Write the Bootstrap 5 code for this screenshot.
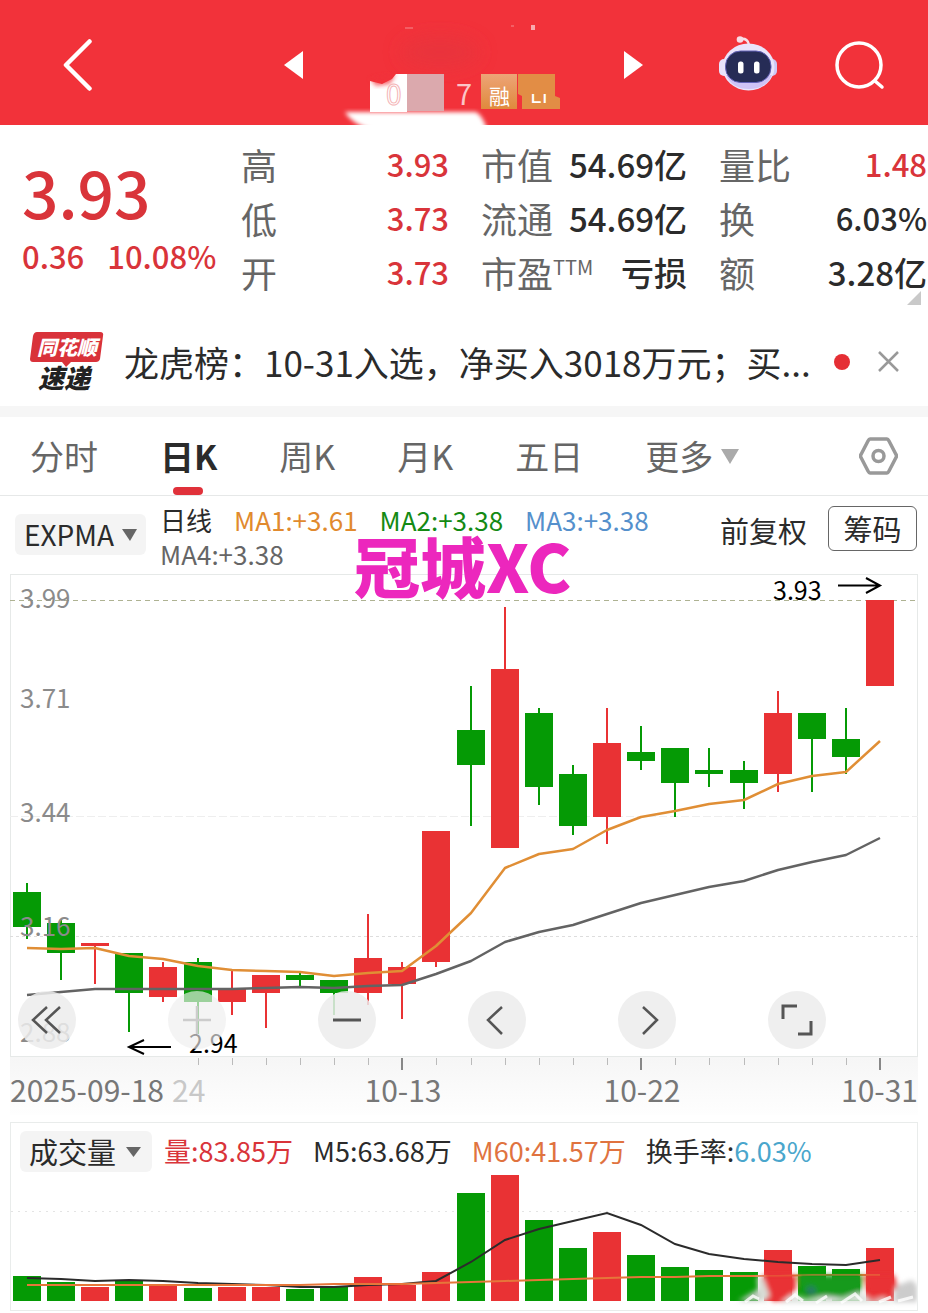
<!DOCTYPE html>
<html lang="zh-CN">
<head>
<meta charset="utf-8">
<meta name="viewport" content="width=device-width, initial-scale=1">
<title>日K</title>
<link href="https://cdn.jsdelivr.net/npm/bootstrap@5.3.0/dist/css/bootstrap.min.css" rel="stylesheet">
<style>
  :root { --up: #e93234; --down: #059a05; --ink: #2b2b2b; --muted: #666; }
  body { font-family: "Noto Sans CJK SC", sans-serif; color: var(--ink); background: #fff; overflow-x: hidden; }
  button { font-family: inherit; }
  svg { display: block; }
  .bare { background: none; border: 0; padding: 0; color: inherit; }
  .topbar { display: grid; grid-template-columns: 29px 192fr 359px 76fr 58px 58fr 49px; align-items: center; height: 125px; padding: 0 44px 0 63px; background: #f2323a; }
  .topbar .bare { padding-top: 4px; }
  .up { color: #d9343a; }
  .quote { display: grid; grid-template-columns: minmax(0, 187fr) minmax(0, 208fr) minmax(0, 206fr) minmax(0, 208fr); column-gap: 32px; padding: 12px 1px 24px 22px; white-space: nowrap; }
  .price { font-size: 64px; line-height: 96px; font-weight: 500; margin-top: 6px; }
  .change { font-size: 31px; line-height: 34px; font-weight: 500; column-gap: 23px; }
  .stat { height: 54px; line-height: 54px; }
  .stat dt { font-size: 36px; font-weight: 400; color: var(--muted); }
  .stat dd { font-size: 31px; font-weight: 500; }
  .stat .han { font-size: 33px; }
  .stat .ttm { font-size: 20px; line-height: 20px; align-self: flex-start; margin-top: 12px; }
  .fold { right: 7px; bottom: 18px; }
  .news { height: 83px; padding: 0 29px 6px 29px; }
  .news svg { overflow: visible; }
  .news a { font-size: 35px; line-height: 52px; color: var(--ink); margin-left: 19px; }
  .news-dot { margin: 0 28px 0 20px; }
  .band { height: 11px; background: #f6f6f6; }
  .tabs { height: 79px; padding: 0 30px 0 30px; border-bottom: 1px solid #e6e8e8; column-gap: 62px; }
  .tabs .bare { font-size: 34px; line-height: 78px; color: var(--muted); position: relative; }
  .tabs .on { color: var(--ink); font-weight: 700; }
  .tabs .on::after { content: ""; position: absolute; left: 50%; bottom: 0; width: 30px; height: 8px; margin-left: -16px; border-radius: 4px; background: #e0313a; }
  .legend-row { height: 78px; padding: 0 11px 0 15px; position: relative; }
  .pill { background: #f4f4f4; border: 0; border-radius: 6px; color: var(--ink); white-space: nowrap; }
  .pill-main { font-size: 28px; line-height: 41px; padding: 0 9px; column-gap: 8px; margin-top: 18px; }
  .pill-vol { font-size: 29px; line-height: 39px; padding: 0 11px 0 9px; column-gap: 10px; }
  .mas { font-size: 26px; line-height: 34px; column-gap: 22px; margin: 7px 0 0 14px; width: 540px; }
  .adjust { font-size: 29px; line-height: 45px; margin-top: 12px; }
  .chips { font-size: 29px; line-height: 43px; width: 89px; border: 1px solid #666; border-radius: 6px; margin: 10px 0 0 21px; }
  .stamp { left: 354px; top: 35px; font-size: 66px; line-height: 66px; font-weight: 900; color: #ec27bd; z-index: 2; white-space: nowrap; }
  .panel { margin: 0 10px; position: relative; }
  .panel svg { width: 100%; height: auto; }
  .tools { left: 8px; width: 89%; top: 77%; }
  .tool { width: 58px; height: 58px; border-radius: 50%; border: 0; padding: 0; background: rgba(236,236,236,.85); }
  .panel .tool svg { width: 58px; height: 58px; }
  .tool-off { background: rgba(238,238,238,.65); }
  .axis { fill: #8b8b8b; font-size: 26px; }
  .date { fill: #777; font-size: 30px; }
  .vol { border: 1px solid #e9eceb; margin-top: 7px; }
  .vol-row { font-size: 27px; line-height: 39px; padding: 8px 0 0 9px; height: 49px; white-space: nowrap; }
  .vol-vals { column-gap: 20px; margin-left: 12px; }
</style>
</head>
<body>
<header class="topbar">
  <button class="bare" aria-label="返回"><svg width="29" height="52" viewBox="0 0 29 52" fill="none" stroke="#fff" stroke-width="4.500" stroke-linecap="round" stroke-linejoin="round"><path d="M26.500 2.500 3 26 26.500 49.500"/></svg></button>
  <span></span>
  <div class="d-flex align-items-center">
    <button class="bare" aria-label="上一只"><svg width="19" height="28" viewBox="0 0 19 28"><path d="M19 0v28L0 14z" fill="#fff"/></svg></button>
    <svg width="321" height="125" viewBox="303 0 321 125" font-family="Noto Sans CJK SC, sans-serif">
      <defs><filter id="soft" x="-20%" y="-20%" width="140%" height="140%"><feGaussianBlur stdDeviation="2"/></filter>
      <filter id="wide" x="-50%" y="-50%" width="200%" height="200%"><feGaussianBlur stdDeviation="9"/></filter>
      <linearGradient id="tan" x1="0" y1="0" x2="0" y2="1"><stop offset="0" stop-color="#eda477"/><stop offset="1" stop-color="#e08a3c"/></linearGradient></defs>
      <ellipse cx="440" cy="52" rx="40" ry="16" fill="#e6353d" opacity=".7" filter="url(#wide)"/>
      <path d="M345 112H476Q483 116 487 130H372Q352 124 345 112Z" fill="#fff" filter="url(#soft)"/>
      <path d="M370 81 382 84 392 79 396 74H407V112H370Z" fill="#fff"/>
      <path d="M370 79 378 77 396 74 390 84 376 86Z" fill="#f2323a" opacity=".7" filter="url(#soft)"/>
      <text x="386" y="105" font-size="28" fill="none" stroke="#f4b4b6">0</text>
      <rect x="407" y="74" width="37" height="37" fill="#dba9ad"/>
      <text x="456" y="105" font-size="29" fill="#fbc5c7">7</text>
      <rect x="481" y="74" width="36" height="35" fill="url(#tan)"/>
      <path d="M518 74H555V96L560 98V109H522V96L518 94Z" fill="#e28d45"/>
      <text x="489" y="104" font-size="21" fill="#fff">融</text>
      <clipPath id="cut"><rect x="522" y="94" width="38" height="15"/></clipPath>
      <text x="530" y="103" font-size="21" fill="#fff" clip-path="url(#cut)">LT</text>
      <path d="M511 26h3M405 28h8" stroke="#f58a8e" fill="none"/><path d="M531 25h4v5h-4z" fill="#f9aaae"/>
    </svg>
    <button class="bare" aria-label="下一只"><svg width="19" height="28" viewBox="0 0 19 28"><path d="M0 0v28L19 14z" fill="#fff"/></svg></button>
  </div>
  <span></span>
  <button class="bare" aria-label="智能助手"><svg width="58" height="58" viewBox="719 36 58 58">
    <path d="M741 39q7-1 8 6" fill="none" stroke="#f6dfe8" stroke-width="2.500"/><circle cx="740" cy="39.500" r="3.300" fill="#f8dce6"/>
    <rect x="719" y="59" width="11" height="17" rx="5" fill="#e8e2fb"/><rect x="766" y="59" width="11" height="17" rx="5" fill="#cdc8f5"/>
    <ellipse cx="748.500" cy="67" rx="26" ry="23.500" fill="#e9e4fb"/>
    <path d="M726 75q6 14 23 14 17 0 23-14z" fill="#cfc3f6"/>
    <rect x="725.500" y="51" width="45.500" height="31.500" rx="15" fill="#262c56" stroke="#6262b8"/>
    <rect x="738" y="61.500" width="5.500" height="12" rx="2.500" fill="#fff"/><rect x="754" y="61.500" width="5.500" height="12" rx="2.500" fill="#fff"/>
  </svg></button>
  <span></span>
  <button class="bare" aria-label="搜索"><svg width="50" height="50" viewBox="0 0 50 50" fill="none" stroke="#fff" stroke-width="3.500" stroke-linecap="round"><circle cx="24" cy="25" r="22"/><path d="m40 41 7 6"/></svg></button>
</header>

<main>
<section class="quote position-relative">
  <div>
    <div class="price up">3.93</div>
    <div class="change up d-flex"><span>0.36</span><span>10.08%</span></div>
  </div>
  <dl class="m-0">
    <div class="stat d-flex justify-content-between"><dt>高</dt><dd class="up m-0">3.93</dd></div>
    <div class="stat d-flex justify-content-between"><dt>低</dt><dd class="up m-0">3.73</dd></div>
    <div class="stat d-flex justify-content-between"><dt>开</dt><dd class="up m-0">3.73</dd></div>
  </dl>
  <dl class="m-0">
    <div class="stat d-flex justify-content-between"><dt>市值</dt><dd class="han m-0">54.69亿</dd></div>
    <div class="stat d-flex justify-content-between"><dt>流通</dt><dd class="han m-0">54.69亿</dd></div>
    <div class="stat d-flex justify-content-between"><dt class="d-flex">市盈<span class="ttm">TTM</span></dt><dd class="han m-0">亏损</dd></div>
  </dl>
  <dl class="m-0">
    <div class="stat d-flex justify-content-between"><dt>量比</dt><dd class="up m-0">1.48</dd></div>
    <div class="stat d-flex justify-content-between"><dt>换</dt><dd class="m-0">6.03%</dd></div>
    <div class="stat d-flex justify-content-between"><dt>额</dt><dd class="han m-0">3.28亿</dd></div>
  </dl>
  <svg class="fold position-absolute" width="14" height="14"><path d="M14 0v14H0z" fill="#c9c9c9"/></svg>
</section>

<section class="news d-flex align-items-center">
  <svg class="flex-shrink-0" width="76" height="62" viewBox="29 331 76 62" font-family="Noto Sans CJK SC, sans-serif" font-weight="900" font-style="italic">
    <path d="M37 332H100q4 0 3 4l-3 23q-1 3-4 3H71l-5 5-4-5H33q-3 0-3-3l3-23q1-4 4-4z" fill="#d9323a"/>
    <text x="37" y="355" font-size="20" fill="#fff">同花顺</text>
    <text x="38" y="388" font-size="26" fill="#222">速递</text>
  </svg>
  <a href="#" class="text-decoration-none text-nowrap flex-grow-1 overflow-hidden">龙虎榜：10-31入选，净买入3018万元；买...</a>
  <svg class="news-dot flex-shrink-0" width="16" height="16"><circle cx="8" cy="8" r="8" fill="#e52e34"/></svg>
  <button class="bare flex-shrink-0" aria-label="关闭"><svg width="21" height="21" fill="none" stroke="#999" stroke-width="2.500"><path d="m1 1 19 19M20 1 1 20"/></svg></button>
</section>
<div class="band"></div>

<nav class="tabs d-flex align-items-center">
  <button class="bare">分时</button><button class="bare on">日K</button><button class="bare">周K</button><button class="bare">月K</button><button class="bare">五日</button>
  <button class="bare d-flex align-items-center gap-2">更多<svg width="18" height="15"><path d="M0 0h18L9 15z" fill="#aaa"/></svg></button>
  <button class="bare ms-auto" aria-label="设置"><svg width="39" height="38" viewBox="0 0 39 38" fill="none" stroke="#999" stroke-width="3.500" stroke-linejoin="round"><path d="M11 2H28Q29 2 30 4L37 17.500Q38 19 37 20.500L30 34Q29 36 28 36H11Q10 36 9 34L2 20.500Q1 19 2 17.500L9 4Q10 2 11 2Z"/><circle cx="19.500" cy="19" r="5.500"/></svg></button>
</nav>

<section class="legend-row d-flex align-items-start">
  <button class="pill pill-main d-flex align-items-center flex-shrink-0">EXPMA<svg width="15" height="12"><path d="M0 0h15L8 12z" fill="#666"/></svg></button>
  <div class="mas d-flex flex-wrap">
    <span>日线</span><span style="color:#e18a2e">MA1:+3.61</span><span style="color:#148a14">MA2:+3.38</span><span style="color:#5590cc">MA3:+3.38</span><span style="color:#666">MA4:+3.38</span>
  </div>
  <button class="bare adjust ms-auto text-nowrap">前复权</button>
  <button class="bare chips text-nowrap flex-shrink-0">筹码</button>
  <div class="stamp position-absolute">冠城XC</div>
</section>

<section class="panel">
  <svg id="kline" viewBox="10 574 908 541" font-family="Noto Sans CJK SC, sans-serif">
    <defs><linearGradient id="fade" x1="0" y1="0" x2="0" y2="1"><stop offset="0" stop-color="#f6f6f6"/><stop offset="1" stop-color="#fefefe"/></linearGradient></defs>
    <rect x="10" y="1057" width="908" height="58" fill="url(#fade)"/>
    <rect x="10.500" y="574.500" width="907" height="482" fill="#fff" stroke="#e6e9e8"/>
    <g fill="none">
      <path d="M10 600.500H918" stroke="#aeb292" stroke-dasharray="5 4"/>
      <path d="M10 816.500H918" stroke="#eee" stroke-dasharray="8 3"/>
      <path d="M10 936.500H918" stroke="#ddd" stroke-dasharray="3 3"/>
    </g>
    <g id="candles"></g>
    <g class="axis"><text x="20" y="608">3.99</text><text x="20" y="708">3.71</text><text x="20" y="822">3.44</text><text x="20" y="936">3.16</text><text x="20" y="1042">2.88</text></g>
    <g id="averages" fill="none" stroke-width="2.500" stroke-linejoin="round"></g>
    <g font-size="25" fill="#000"><text x="773" y="600">3.93</text><text x="189" y="1053">2.94</text></g>
    <g fill="none" stroke="#000" stroke-width="2"><path d="M838 585.500H880M866 578l14 7.500-14 7.500"/><path d="M171 1047H129M144 1040l-15 7 15 7"/></g>
    <g id="ticks"></g>
    <g class="date"><text x="10" y="1102">2025-09-18</text><text x="172" y="1102" fill="#c8c8c8">24</text><text x="403" y="1102" text-anchor="middle">10-13</text><text x="642" y="1102" text-anchor="middle">10-22</text><text x="918" y="1102" text-anchor="end">10-31</text></g>
  </svg>
  <div class="tools position-absolute d-flex justify-content-between">
    <button class="tool" aria-label="最早"><svg viewBox="0 0 58 58" fill="none" stroke="#555" stroke-width="2.500"><path d="M29 16 15 29l14 13M42 16 28 29l14 13"/></svg></button>
    <button class="tool tool-off" aria-label="放大"><svg viewBox="0 0 58 58" fill="none" stroke="#ccc" stroke-width="2.500"><path d="M15 29h28M29 15v28"/></svg></button>
    <button class="tool" aria-label="缩小"><svg viewBox="0 0 58 58" fill="none" stroke="#555" stroke-width="3"><path d="M15 29h28"/></svg></button>
    <button class="tool" aria-label="左移"><svg viewBox="0 0 58 58" fill="none" stroke="#555" stroke-width="2.500"><path d="M34 16 20 29l14 14"/></svg></button>
    <button class="tool" aria-label="右移"><svg viewBox="0 0 58 58" fill="none" stroke="#555" stroke-width="2.500"><path d="m25 16 14 13-14 14"/></svg></button>
    <button class="tool" aria-label="全屏"><svg viewBox="0 0 58 58" fill="none" stroke="#555" stroke-width="3"><path d="M15 28V15h14M43 30v13H30"/></svg></button>
  </div>
</section>

<section class="panel vol">
  <div class="vol-row d-flex">
    <button class="pill pill-vol d-flex align-items-center">成交量<svg style="width:15px;height:10px" viewBox="0 0 15 10"><path d="M0 0h15L7.500 10z" fill="#666"/></svg></button>
    <div class="vol-vals d-flex"><span class="up">量:83.85万</span><span>M5:63.68万</span><span style="color:#e0733f">M60:41.57万</span><span>换手率:<span style="color:#4aa6cc">6.03%</span></span></div>
  </div>
  <svg id="volume" viewBox="11 1172 906 138">
    <defs><filter id="haze" x="-20%" y="-50%" width="140%" height="200%"><feGaussianBlur stdDeviation="2.500"/></filter></defs>
    <path d="M11 1211.500H917" stroke="#e4e4e4" stroke-dasharray="2 5"/>
    <g id="bars"></g>
    <g id="volavg" fill="none" stroke-width="2"></g>
    <g filter="url(#haze)">
      <path d="M738 1301l20-12 8 6-6 6z" fill="#b9c5b9"/><path d="M759 1300l-2-23 9 0 6 14-6 11z" fill="#d8ddd6"/>
      <path d="M762 1275h34v14l-12 12h-12z" fill="#e93234"/><path d="M797 1275h66l-2 16-30 8-28-6z" fill="#189a1c"/>
      <path d="M864 1275h30l4 12-12 8h-18z" fill="#e93234"/><path d="M896 1286l16-6 5 6v16h-24z" fill="#ccc"/>
      <circle cx="811" cy="1291" r="5" fill="#277b63"/>
      <path d="M780 1303l12-9 14 5 20-3 16 2 18-6 12 8 12-3 10 6z" fill="#dfe3df"/>
    </g>
    <path d="M745 1302l8-6 6 3M786 1302l9-7 8 6M816 1303l11-7M841 1303l14-9 7 7M879 1302l12-5M898 1301l15-4" stroke="#fff" stroke-width="3" opacity=".8" fill="none"/>
  </svg>
</section>
</main>

<script src="https://cdn.jsdelivr.net/npm/bootstrap@5.3.0/dist/js/bootstrap.bundle.min.js"></script>
<script>
  // Each day: colour, body top, body bottom, wick top, wick bottom, volume bar top
  const days = [
    ['d',892,927,883,939,1276],['d',923,953,919,980,1282],['u',943,946,943,984,1287],['d',953,993,953,1032,1281],
    ['u',967,997,962,1002,1285],['d',962,1002,958,1034,1288],['u',989,1002,970,1015,1287],['u',975,993,975,1028,1287],
    ['d',975,980,973,987,1289],['d',980,993,980,1015,1287],['u',958,993,914,1005,1277],['u',967,984,962,1019,1285],
    ['u',831,962,831,967,1272],['d',730,765,686,826,1193],['u',669,848,607,848,1175],['d',713,787,708,805,1220],
    ['d',774,826,765,835,1248],['u',743,817,708,844,1232],['d',752,761,726,770,1255],['d',748,783,748,817,1267],
    ['d',770,774,748,787,1270],['d',770,783,761,809,1272],['u',713,774,691,792,1250],['d',713,739,713,792,1266],
    ['d',739,757,708,774,1269],['u',600,686,600,686,1248]];
  const ma1 = [948,949,948,956,959,966,970,971,972,976,973,971,946,913,868,854,849,830,817,811,804,800,784,776,772,741];
  const ma4 = [995,992,989,989,989,989,989,988,987,988,986,985,974,961,942,932,925,914,903,895,887,881,870,862,855,838];
  const m5 = [1278,1279,1281,1280,1281,1283,1284,1285,1287,1287,1285,1284,1281,1262,1240,1229,1221,1213,1225,1244,1254,1259,1262,1264,1265,1260];
  const m60 = [1285,1285,1285,1285,1285,1285,1285,1285,1285,1284,1284,1284,1283,1282,1281,1280,1279,1278,1277,1277,1276,1276,1276,1275,1275,1275];
  const x = i => Math.round(27 + i * 34.12);
  const colour = c => c === 'u' ? 'var(--up)' : 'var(--down)';
  const line = (v, c) => `<polyline stroke="${c}" points="${v.map((y, i) => x(i) + ',' + y).join(' ')}"/>`;
  const put = (id, html) => document.getElementById(id).innerHTML = html;
  put('candles', days.map(([c, t, b, h, l], i) =>
    `<g fill="${colour(c)}"><rect x="${x(i) - 1}" y="${h}" width="2" height="${l - h}"/><rect x="${x(i) - 14}" y="${t}" width="28" height="${b - t}"/></g>`).join(''));
  put('averages', line(ma4, '#636363') + line(ma1, '#e08e35'));
  put('ticks', days.map((d, i) => i < 5 ? '' : [11, 18, 25].includes(i)
    ? `<rect x="${x(i) - 1}" y="1058" width="2" height="12" fill="#888"/>`
    : `<rect x="${x(i)}" y="1058" width="1" height="7" fill="#bbb"/>`).join(''));
  put('bars', days.map((d, i) => `<rect x="${x(i) - 14}" y="${d[5]}" width="28" height="${1301 - d[5]}" fill="${colour(d[0])}"/>`).join(''));
  put('volavg', line(m5, '#2b2b2b') + line(m60, '#e6763a'));
</script>
</body>
</html>
